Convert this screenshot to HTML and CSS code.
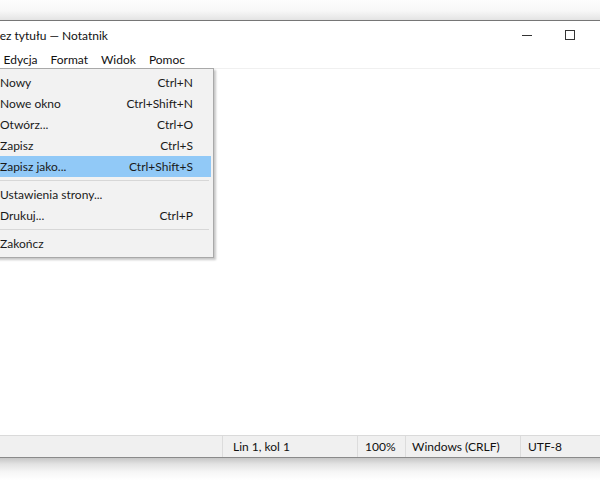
FILE: index.html
```html
<!DOCTYPE html>
<html lang="pl">
<head>
<meta charset="utf-8">
<title>Bez tytułu — Notatnik</title>
<link rel="stylesheet" href="styles.css">
</head>
<body>
  <div class="desktop-top"></div>
  <div class="window">
    <div class="titlebar">
      <span class="title">Bez tytułu — Notatnik</span>
      <div class="caption-buttons">
        <span class="cap-btn">
          <svg width="10" height="10" viewBox="0 0 10 10"><path d="M0 5.5h10" stroke="#333" stroke-width="1"/></svg>
        </span>
        <span class="cap-btn">
          <svg width="10" height="10" viewBox="0 0 10 10"><rect x="0.5" y="0.5" width="9" height="9" fill="none" stroke="#333" stroke-width="1"/></svg>
        </span>
        <span class="cap-btn">
          <svg width="10" height="10" viewBox="0 0 10 10"><path d="M0 0l10 10M10 0L0 10" stroke="#333" stroke-width="1"/></svg>
        </span>
      </div>
    </div>
    <div class="menubar">
      <span class="menu-item open">Plik</span>
      <span class="menu-item">Edycja</span>
      <span class="menu-item">Format</span>
      <span class="menu-item">Widok</span>
      <span class="menu-item">Pomoc</span>
    </div>
    <div class="editor"></div>
    <div class="statusbar">
      <span class="status-fill"></span>
      <span class="status-cell pos">Lin 1, kol 1</span>
      <span class="status-cell zoom">100%</span>
      <span class="status-cell eol">Windows (CRLF)</span>
      <span class="status-cell enc">UTF-8</span>
    </div>

    <div class="dropdown">
      <div class="dd-item"><span>Nowy</span><span class="key">Ctrl+N</span></div>
      <div class="dd-item"><span>Nowe okno</span><span class="key">Ctrl+Shift+N</span></div>
      <div class="dd-item"><span>Otwórz...</span><span class="key">Ctrl+O</span></div>
      <div class="dd-item"><span>Zapisz</span><span class="key">Ctrl+S</span></div>
      <div class="dd-item active"><span>Zapisz jako...</span><span class="key">Ctrl+Shift+S</span></div>
      <div class="dd-sep"></div>
      <div class="dd-item"><span>Ustawienia strony...</span><span class="key"></span></div>
      <div class="dd-item"><span>Drukuj...</span><span class="key">Ctrl+P</span></div>
      <div class="dd-sep"></div>
      <div class="dd-item"><span>Zakończ</span><span class="key"></span></div>
    </div>
  </div>
  <div class="desktop-bottom"></div>
</body>
</html>
```

FILE: styles.css
```css
html, body {
  margin: 0;
  padding: 0;
  width: 600px;
  height: 480px;
  overflow: hidden;
  background: #ffffff;
  font-family: Lato, "Noto Sans", sans-serif;
  font-size: 12px;
  color: #1a1a1a;
}

.desktop-top {
  height: 20px;
  background: linear-gradient(#fdfdfd 0, #f7f7f7 11px, #e6e6e6 19px, #e2e2e2 20px);
}

.window {
  position: relative;
  width: 635px;
  border-top: 1px solid #767676;
  border-bottom: 1px solid #8a8a8a;
  background: #fff;
}

.titlebar {
  height: 26px;
  display: flex;
  align-items: center;
}

.title {
  margin-left: -8px;
  line-height: 26px;
  color: #111;
  padding-top: 3px;
}

.caption-buttons {
  margin-left: auto;
  margin-right: 1px;
  display: flex;
  height: 26px;
  padding-top: 2px;
}

.cap-btn {
  width: 43px;
  height: 26px;
  display: flex;
  align-items: center;
  justify-content: center;
}

.menubar {
  height: 21px;
  display: flex;
  align-items: center;
  margin-left: -34px;
  border-bottom: 1px solid #f0f0f0;
}

.menu-item {
  padding: 0 6.5px;
  line-height: 21px;
  padding-top: 3px;
  color: #111;
}

.menu-item.open {
  padding-right: 5.5px;
}

.editor {
  height: 366px;
  background: #fff;
}

.statusbar {
  height: 21px;
  display: flex;
  align-items: stretch;
  background: #f0f0f0;
  border-top: 1px solid #dadada;
}

.status-fill {
  width: 222px;
  flex: none;
}

.status-cell {
  border-left: 1px solid #dcdcdc;
  padding-left: 10px;
  line-height: 21px;
  flex: none;
  color: #111;
}

.status-cell.pos { width: 124px; }
.status-cell.zoom { width: 40px; padding-left: 7px; }
.status-cell.eol { width: 108px; padding-left: 6px; }
.status-cell.enc { width: 120px; padding-left: 7px; }

.desktop-bottom {
  height: 40px;
  background: linear-gradient(#c6c6c6 0, #e2e2e2 6px, #f6f6f6 14px, #ffffff 22px);
}

/* open "Plik" menu, drawn over the window */
.dropdown {
  position: absolute;
  top: 47px;
  left: -34px;
  width: 242px;
  padding: 3px 2px;
  background: #f2f2f2;
  border: 1px solid #a9a9a9;
  box-shadow: 2px 2px 2px rgba(0, 0, 0, 0.22);
}

.dd-item {
  height: 21px;
  display: flex;
  align-items: center;
  justify-content: space-between;
  padding: 0 18px 0 31px;
  color: #1a1a1a;
}

.dd-item.active {
  background: #91c9f7;
}

.dd-sep {
  height: 1px;
  margin: 3px 2px 3px 30px;
  background: #d7d7d7;
}
```
